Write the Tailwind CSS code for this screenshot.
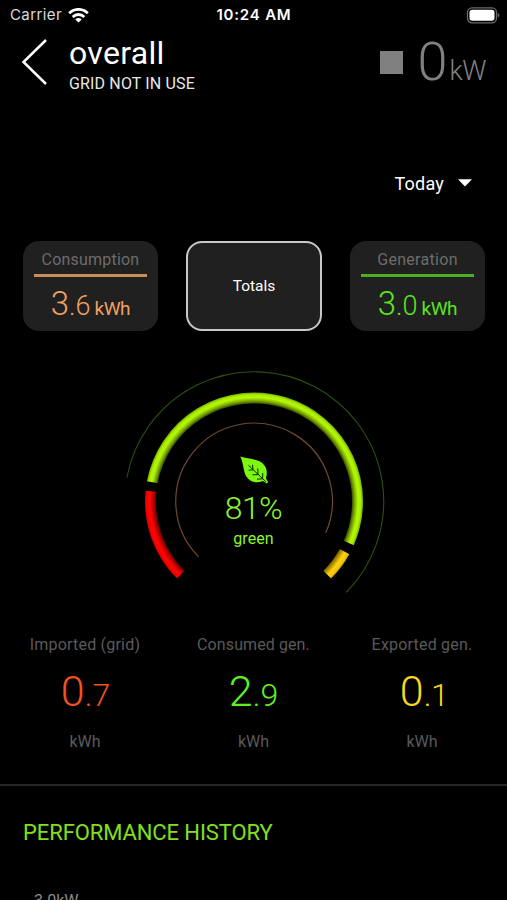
<!DOCTYPE html>
<html lang="en">
<head>
  <meta charset="UTF-8" />
  <meta name="viewport" content="width=device-width, initial-scale=1.0" />
  <title>Overall - Energy</title>
  <script src="https://cdn.jsdelivr.net/npm/@tailwindcss/browser@4"></script>
</head>
<body class="bg-black text-white font-[Roboto,sans-serif] h-[900px] overflow-hidden">
  <!-- Status bar -->
  <div class="grid grid-cols-3 items-center h-[30px] pl-2.5 pr-[7px] font-[Inter,sans-serif] text-[15px]">
    <div class="flex items-center gap-1.5">
      <span class="text-[#dcdcdc] tracking-[0.4px]">Carrier</span>
      <svg class="w-[21px] h-[15px]" viewBox="0 0 21 15" fill="none" stroke="#fff" stroke-width="2.8">
        <path d="M1.2 5.2a13.2 13.2 0 0 1 18.6 0" />
        <path d="M4.7 8.9a8.2 8.2 0 0 1 11.6 0" />
        <path d="M10.5 14.6 7.3 11.4a4.6 4.6 0 0 1 6.4 0Z" fill="#fff" stroke="none" />
      </svg>
    </div>
    <span class="text-center font-semibold whitespace-nowrap tracking-[0.8px] -ml-0.5">10:24 AM</span>
    <svg class="w-[34px] h-[17px] justify-self-end" viewBox="0 0 34 17">
      <rect x="1.5" y=".8" width="29" height="15" rx="4.5" fill="none" stroke="#6b6b6b" stroke-width="1.3" />
      <rect x="3.5" y="2.8" width="25" height="11" rx="2.8" fill="#fff" />
      <path d="M31.8 6.1c2 .6 2 3.8 0 4.4Z" fill="#6b6b6b" />
    </svg>
  </div>

  <!-- Header -->
  <header class="flex h-[70px] pl-[21px] pr-[21px]">
    <svg class="w-7 h-[50px] mt-[7px]" viewBox="0 0 28 50" fill="none" stroke="#fff" stroke-width="2.5">
      <path d="M25 3 2.5 25 25 47" />
    </svg>
    <div class="ml-5 pt-[5px]">
      <h1 class="text-[32px] leading-9 tracking-[0.3px]">overall</h1>
      <p class="text-base leading-[26px] whitespace-nowrap text-[#e8e8e8] tracking-[0.15px]">GRID NOT IN USE</p>
    </div>
    <div class="ml-auto flex text-[#808080] font-light">
      <div class="w-[23px] h-[23px] bg-[#808080] mt-[21px] mr-[15px]"></div>
      <div class="flex items-baseline leading-[64px] h-16">
        <span class="text-[54px]">0</span>
        <span class="text-[27px] ml-0.5 tracking-[-0.5px]">kW</span>
      </div>
    </div>
  </header>

  <!-- Period select -->
  <div class="flex justify-end items-center h-6 mt-[72px] pr-[35px] gap-3.5">
    <span class="text-lg tracking-[0.2px]">Today</span>
    <svg class="w-3.5 h-2 mb-0.5" viewBox="0 0 14 8"><path d="M0 .3h14L7 7.5Z" fill="#fff" /></svg>
  </div>

  <!-- Summary cards -->
  <div class="flex justify-between mt-[45px] pl-[23px] pr-[22px] h-[90px]">
    <div class="w-[135px] rounded-2xl bg-[#202020] text-center px-[11px]">
      <div class="h-[33px] pt-[7px] leading-6 text-[#6c6c6c] tracking-[0.2px]">Consumption</div>
      <div class="h-[2.5px] bg-[#c98d5c]"></div>
      <div class="text-[#f0a060] font-light leading-[53px] whitespace-nowrap">
        <span class="text-[33px]">3</span><span class="text-[27px]">.6</span>
        <span class="text-[19px] font-normal tracking-[-0.4px]">kWh</span>
      </div>
    </div>
    <div class="w-[136px] rounded-2xl bg-[#202020] border-2 border-[#c8c8c8] flex items-center justify-center">
      <span class="pt-0.5 text-[15.5px]">Totals</span>
    </div>
    <div class="w-[135px] rounded-2xl bg-[#202020] text-center px-[11px]">
      <div class="h-[33px] pt-[7px] leading-6 text-[#6c6c6c] tracking-[0.3px]">Generation</div>
      <div class="h-[2.5px] bg-[#4dae25]"></div>
      <div class="text-[#5ae61e] font-light leading-[53px] whitespace-nowrap">
        <span class="text-[33px]">3</span><span class="text-[27px]">.0</span>
        <span class="text-[19px] font-normal tracking-[-0.4px]">kWh</span>
      </div>
    </div>
  </div>

  <!-- Gauge -->
  <div class="grid h-[289px]">
    <svg class="col-start-1 row-start-1 w-[507px] h-[289px]" viewBox="0 331 507 289" fill="none">
      <defs>
        <radialGradient id="greenTube" gradientUnits="userSpaceOnUse" cx="254" cy="501.5" r="109.5">
          <stop offset=".89" stop-color="#2a3a00" />
          <stop offset=".92" stop-color="#7ba800" />
          <stop offset=".95" stop-color="#b4f808" />
          <stop offset=".975" stop-color="#a8ec00" />
          <stop offset="1" stop-color="#6c9800" />
        </radialGradient>
        <radialGradient id="redTube" gradientUnits="userSpaceOnUse" cx="254" cy="501.5" r="109.5">
          <stop offset=".89" stop-color="#500000" />
          <stop offset=".92" stop-color="#b80000" />
          <stop offset=".95" stop-color="#ff0400" />
          <stop offset=".98" stop-color="#f80000" />
          <stop offset="1" stop-color="#a80000" />
        </radialGradient>
        <radialGradient id="yellowTube" gradientUnits="userSpaceOnUse" cx="254" cy="501.5" r="109.5">
          <stop offset=".89" stop-color="#6c5400" />
          <stop offset=".92" stop-color="#b89400" />
          <stop offset=".95" stop-color="#ffd414" />
          <stop offset=".98" stop-color="#f4c400" />
          <stop offset="1" stop-color="#b08c00" />
        </radialGradient>
      </defs>
      <path d="M126.9 477.5A129.5 129.5 0 1 1 346.3 592.3" stroke="#2c5210" stroke-width="1.1" />
      <path d="M198.7 556.8A78.3 78.3 0 1 1 325.8 532.8" stroke="#70492f" stroke-width="1.2" />
      <path d="M152.3 482.3A103.5 103.5 0 1 1 348.8 543" stroke="url(#greenTube)" stroke-width="11" />
      <path d="M151 491.2A103.5 103.5 0 0 0 180.8 574.7" stroke="url(#redTube)" stroke-width="11" />
      <path d="M344.6 551.6A103.5 103.5 0 0 1 327.2 574.7" stroke="url(#yellowTube)" stroke-width="11" />
    </svg>
    <div class="col-start-1 row-start-1 flex flex-col items-center pt-[125px] text-[#8cf52a]">
      <svg class="w-7 h-7" viewBox="0 0 28 28">
        <path d="M.3.5C6 2.6 13.5 2.3 19.5 5.3 26.5 9 28 15.5 26 22.3L28 26.2 27 27.4 22.8 25C16.5 27.6 9.5 26 6 20 3 14 3.6 7 .3.5Z" fill="#7cf80e" />
        <path d="M8.4 9.2 26 25.8M12.5 8.8 13 13.5M8.6 14.2 13.4 13.8M17.8 12.4 18 18.4M12.5 18.8 18.3 18.6M22.8 17 22.6 22.8M17 23.2 22.8 22.8" fill="none" stroke="#0f2600" stroke-width="1" />
      </svg>
      <div class="text-[32px] font-light leading-10 mt-1 tracking-[-0.6px]">81%</div>
      <div class="text-base leading-6 tracking-[0.1px] -mt-px">green</div>
    </div>
  </div>

  <!-- Energy totals -->
  <div class="flex justify-between h-[164px] pt-[13px] pl-[15px] pr-[15px] text-center text-[#5a5a5a] whitespace-nowrap">
    <div class="w-[140px]">
      <div class="leading-6 tracking-[0.2px]">Imported (grid)</div>
      <div class="h-[73px] leading-[69px] pl-px text-[#f4511e] font-light"><span class="text-[43px]">0</span><span class="text-[32px]">.7</span></div>
      <div class="leading-6">kWh</div>
    </div>
    <div class="w-[140px]">
      <div class="leading-6 tracking-[0.1px]">Consumed gen.</div>
      <div class="h-[73px] leading-[69px] text-[#5cf01e] font-light"><span class="text-[43px]">2</span><span class="text-[32px]">.9</span></div>
      <div class="leading-6">kWh</div>
    </div>
    <div class="w-[140px]">
      <div class="leading-6 tracking-[0.2px]">Exported gen.</div>
      <div class="h-[73px] leading-[69px] pl-1 text-[#fbd91c] font-light"><span class="text-[43px]">0</span><span class="text-[32px] tracking-[-0.5px]">.1</span></div>
      <div class="leading-6">kWh</div>
    </div>
  </div>

  <!-- Performance history -->
  <section class="border-t-2 border-[#262626] pl-[23px] h-[116px] overflow-hidden">
    <h2 class="text-[22px] leading-8 mt-[31px] text-[#80e01e] whitespace-nowrap tracking-[-0.1px]">PERFORMANCE HISTORY</h2>
    <div class="mt-[40px] ml-[11px] leading-6 text-[#8a8a8a]">3.0kW</div>
  </section>
</body>
</html>
